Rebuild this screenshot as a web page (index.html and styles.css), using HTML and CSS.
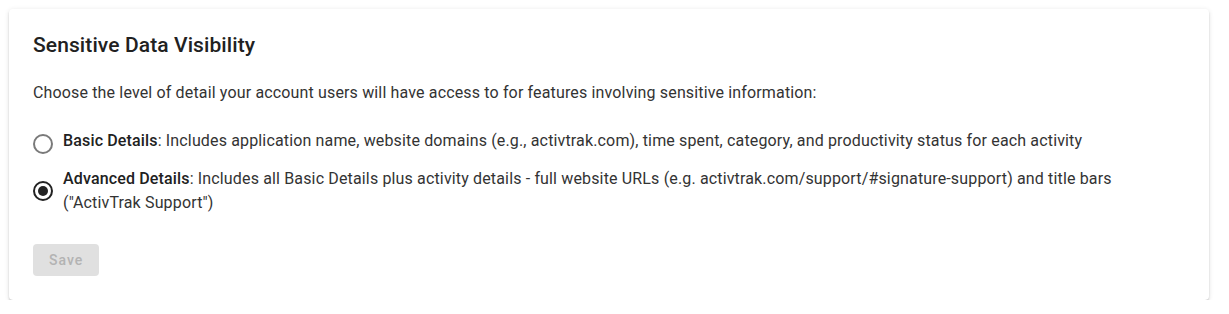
FILE: index.html
```html
<!DOCTYPE html>
<html lang="en">
<head>
<meta charset="utf-8">
<title>Sensitive Data Visibility</title>
<link rel="stylesheet" href="styles.css">
</head>
<body>
<section class="card">
  <h2 class="card-title">Sensitive Data Visibility</h2>
  <p class="card-desc">Choose the level of detail your account users will have access to for features involving sensitive information:</p>
  <div class="options" role="radiogroup">
    <label class="option">
      <span class="radio radio-single">
        <svg viewBox="0 0 24 24" width="24" height="24" aria-hidden="true"><circle cx="12" cy="12" r="9" fill="none" stroke="currentColor" stroke-width="2"/></svg>
      </span>
      <span class="option-text"><b>Basic Details</b>: Includes application name, website domains (e.g., activtrak.com), time spent, category, and productivity status for each activity</span>
    </label>
    <label class="option">
      <span class="radio radio-checked">
        <svg viewBox="0 0 24 24" width="24" height="24" aria-hidden="true"><circle cx="12" cy="12" r="9" fill="none" stroke="currentColor" stroke-width="2"/><circle cx="12" cy="12" r="5" fill="currentColor"/></svg>
      </span>
      <span class="option-text"><b>Advanced Details</b>: Includes all Basic Details plus activity details - full website URLs (e.g. activtrak.com/support/#signature-support) and title bars<br>("ActivTrak Support")</span>
    </label>
  </div>
  <button class="btn" type="button" disabled>Save</button>
</section>
</body>
</html>
```

FILE: styles.css
```css
html, body {
  margin: 0;
  padding: 0;
  background: #ffffff;
}

body {
  font-family: Roboto, "Liberation Sans", Arial, sans-serif;
  color: #2f2f2f;
}

.card {
  width: 1200px;
  box-sizing: border-box;
  margin: 9px 0 0 9px;
  padding: 24px;
  background: #ffffff;
  border-radius: 4px;
  box-shadow: 0 3px 1px -2px rgba(0, 0, 0, 0.2), 0 2px 2px 0 rgba(0, 0, 0, 0.14), 0 1px 5px 0 rgba(0, 0, 0, 0.12);
}

.card-title {
  margin: 0;
  font-size: 21px;
  line-height: 24px;
  font-weight: 500;
  letter-spacing: 0.1px;
  color: #212121;
}

.card-desc {
  margin: 24px 0 0;
  font-size: 16px;
  line-height: 24px;
  letter-spacing: 0.15px;
  color: #333333;
}

.options {
  margin-top: 24px;
  display: flex;
  flex-direction: column;
  gap: 14px;
}

.option {
  display: flex;
  align-items: center;
  font-size: 16px;
  line-height: 24px;
  letter-spacing: 0.15px;
  color: #333333;
}

.option b {
  font-weight: 500;
  color: #212121;
}

.radio {
  flex: none;
  width: 24px;
  height: 24px;
  margin-left: -2px;
  margin-right: 8px;
  color: #7a7a7a;
}

.radio-single {
  margin-top: 3px;
  margin-bottom: -3px;
}

.radio svg {
  display: block;
}

.radio-checked {
  color: #222222;
}

.option-text {
  flex: 1;
}

.btn {
  margin-top: 29px;
  display: block;
  height: 32px;
  padding: 0 16px;
  border: none;
  border-radius: 4px;
  background: #e0e0e0;
  color: #b3b3b3;
  font-family: Roboto, "Liberation Sans", Arial, sans-serif;
  font-size: 14px;
  font-weight: 500;
  letter-spacing: 1px;
}
```
